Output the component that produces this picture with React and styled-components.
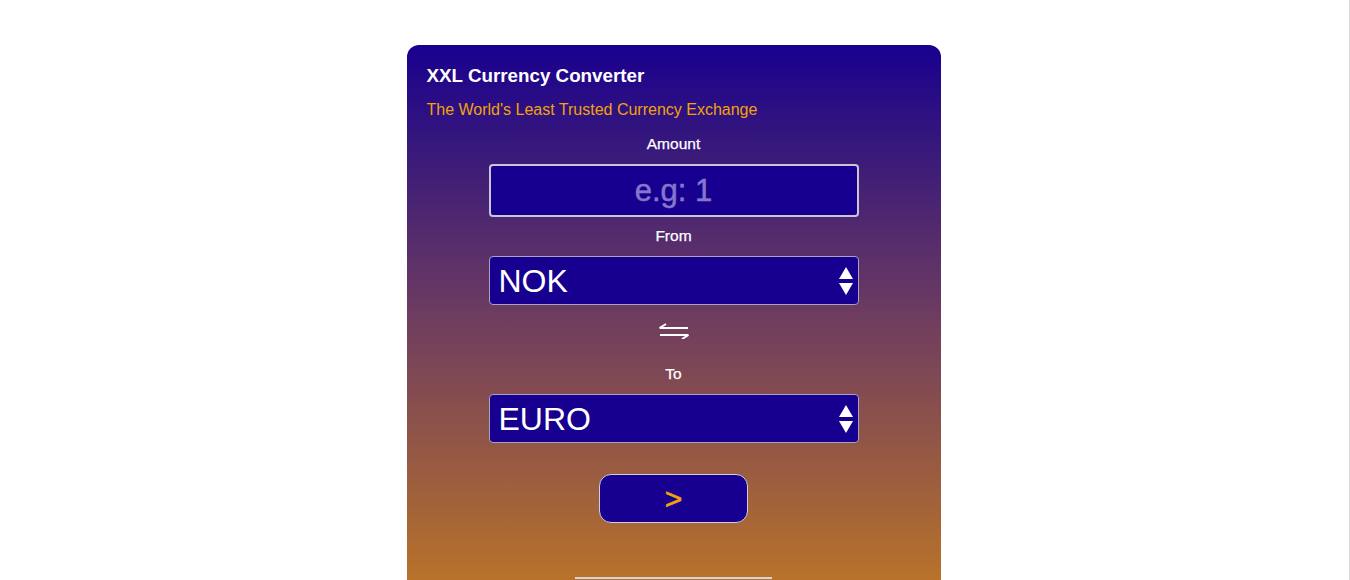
import styled, { createGlobalStyle } from "styled-components";

const GlobalStyle = createGlobalStyle`
  html {
    overflow: hidden;
  }
  body {
    margin: 0;
    min-height: 100vh;
    background: #fff;
    border-right: 1px solid #dcdcdc;
    box-sizing: border-box;
    font-family: "Liberation Sans", Arial, sans-serif;
  }
`;

const Page = styled.div`
  display: flex;
  justify-content: center;
  padding-top: 45px;
  padding-right: 2px;
`;

const Card = styled.div`
  width: 534px;
  height: 640px;
  border-radius: 12px;
  background: linear-gradient(180deg, #19008f 0px, #3a1a7a 110px, #6e3c60 270px, #b8722a 535px, #c77b1c 640px);
  padding: 20px 20px 0;
  box-sizing: border-box;
  display: flex;
  flex-direction: column;
`;

const Title = styled.h1`
  margin: 0;
  font-size: 18.8px;
  line-height: 22px;
  font-weight: bold;
  color: #fff;
`;

const Tagline = styled.p`
  margin: 13px 0 0;
  font-size: 16px;
  line-height: 20px;
  color: #f2a20a;
`;

const Form = styled.div`
  display: flex;
  flex-direction: column;
  align-items: center;
`;

const Label = styled.label`
  display: block;
  margin-top: ${(p) => p.$top}px;
  font-size: 15.5px;
  line-height: 18px;
  color: #fff;
  -webkit-text-stroke: 0.25px #fff;
`;

const AmountInput = styled.input`
  margin-top: 11px;
  width: 370px;
  height: 53px;
  box-sizing: border-box;
  border: 2px solid #c9c6d6;
  border-radius: 4px;
  background: #17008f;
  color: #fff;
  text-align: center;
  font-family: "Liberation Sans", Arial, sans-serif;
  font-size: 31px;
  outline: none;
  &::placeholder {
    color: #8676cc;
    -webkit-text-stroke: 0.5px #8676cc;
  }
`;

const SelectWrap = styled.div`
  position: relative;
  margin-top: ${(p) => p.$top}px;
  width: 370px;
  height: 49px;
`;

const Select = styled.select`
  appearance: none;
  width: 100%;
  height: 100%;
  box-sizing: border-box;
  border: 1px solid #a8a3c0;
  border-radius: 4px;
  background: #17008f;
  color: #fff;
  padding: 0 0 0 9px;
  font-family: "Liberation Sans", Arial, sans-serif;
  font-size: 32px;
  outline: none;
`;

const Arrows = styled.svg`
  position: absolute;
  right: 5px;
  top: 10px;
  pointer-events: none;
`;

const SwapIcon = styled.svg`
  margin-top: 18px;
  display: block;
`;

const ConvertButton = styled.button`
  margin-top: 31px;
  width: 149px;
  height: 49px;
  border: 1px solid #d2cde0;
  border-radius: 12px;
  background: #17008f;
  color: #f2a20a;
  font-family: "Liberation Sans", Arial, sans-serif;
  font-size: 30px;
  font-weight: normal;
  -webkit-text-stroke: 0.6px #f2a20a;
  line-height: 1;
  cursor: pointer;
`;

const Divider = styled.hr`
  margin: 54px 0 0;
  width: 197px;
  border: 0;
  border-top: 2px solid #d8d4de;
`;

function SelectArrows() {
  return (
    <Arrows width="16" height="30" viewBox="0 0 16 30">
      <path d="M8 1 L15 13 L1 13 Z" fill="#fff" />
      <path d="M1 17 L15 17 L8 29 Z" fill="#fff" />
    </Arrows>
  );
}

function CurrencySelect({ top, value, options }) {
  return (
    <SelectWrap $top={top}>
      <Select defaultValue={value}>
        {options.map((o) => (
          <option key={o}>{o}</option>
        ))}
      </Select>
      <SelectArrows />
    </SelectWrap>
  );
}

const currencies = ["NOK", "EURO", "USD", "SEK", "GBP"];

export default function App() {
  return (
    <>
      <GlobalStyle />
      <Page>
        <Card>
          <Title>XXL Currency Converter</Title>
          <Tagline>The World's Least Trusted Currency Exchange</Tagline>
          <Form>
            <Label $top={15}>Amount</Label>
            <AmountInput placeholder="e.g: 1" />
            <Label $top={10}>From</Label>
            <CurrencySelect top={11} value="NOK" options={currencies} />
            <SwapIcon width="32" height="16" viewBox="0 0 32 16">
              <path d="M1.5 5 H30 M1.5 5 L8 1" stroke="#fff" strokeWidth="2" fill="none" />
              <path d="M2 12 H30.5 M30.5 12 L24 16" stroke="#fff" strokeWidth="2" fill="none" />
            </SwapIcon>
            <Label $top={26}>To</Label>
            <CurrencySelect top={11} value="EURO" options={currencies} />
            <ConvertButton>&gt;</ConvertButton>
            <Divider />
          </Form>
        </Card>
      </Page>
    </>
  );
}
